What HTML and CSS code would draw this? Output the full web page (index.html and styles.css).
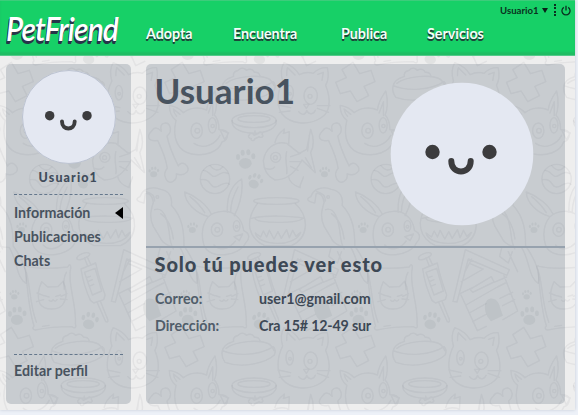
FILE: index.html
```html
<!DOCTYPE html>
<html lang="es">
<head>
<meta charset="utf-8">
<title>PetFriend</title>
<link rel="stylesheet" href="styles.css">
</head>
<body>
<div class="app">
  <svg class="doodles" width="575" height="410" viewBox="0 0 575 410" aria-hidden="true">
    <defs>
      <g id="paw"><ellipse cx="0" cy="7" rx="19" ry="16"/><ellipse cx="-22" cy="-12" rx="6" ry="9"/><ellipse cx="-8" cy="-25" rx="6" ry="9"/><ellipse cx="9" cy="-26" rx="6" ry="9"/><ellipse cx="24" cy="-14" rx="6" ry="9"/></g>
      <g id="tile">
        <g class="ink" transform="translate(140 55) scale(.33333)">
          <path d="M247 92c5-22 25-24 34-28-4-14 8-16 14-18 12-13 22-3 24 0 14-8 22 0 24 6 18-2 17 13 17 13 30 3 37 14 42 27M247 92c-4 16 0 24 8 35 55 20 125 0 148-22 4-10 3-20-3-25-40 26-110 30-153 12zM258 85c28-22 100-28 132-12"/>
          <path d="M428 78c-6-20-5-40 4-55 20 7 38 23 46 36 17-8 30-8 42-4 12-12 24-18 42-17 5 20 2 40-5 53 20 50 10 83-15 98-40 25-92 17-116-12-18-28-14-66 2-99zM440 62c0-12 0-18 3-24l22 22M533 58l17-6-4 24M414 150l38 8M418 172l32-4M532 160l34 12M532 152l38 0M476 170c10 14 22 8 24-4 6 14 20 14 26 0M491 148l16 0-8 12z"/>
          <ellipse cx="512" cy="122" rx="20" ry="26"/><ellipse cx="449" cy="113" rx="11" ry="22"/><circle cx="510" cy="124" r="6"/><circle cx="450" cy="116" r="4"/>
          <path d="M606 44l33-22 20 34 34-10 12 34-33 14 14 28-35 18-20-32-30 8-14-34 32-14z"/>
          <path d="M108 196c-14-10-20-28-20-45 20 3 35 14 42 22 20-16 48-18 70-8 2-25 16-44 25-57 8 30 4 60-2 72 12 12 14 28 14 44 18 0 26 4 26 13 0 16-10 22-17 24-10 30-52 44-91 36-40-8-60-45-47-101zM110 184c-6-6-9-15-10-22l20 16M205 174l13-34 0 42M162 265c30 22 66 0 78-24M240 224l26 10-12 20z"/>
          <ellipse cx="170" cy="227" rx="17" ry="23"/><ellipse cx="217" cy="211" rx="12" ry="23"/><circle cx="172" cy="227" r="7"/><circle cx="218" cy="213" r="5"/>
          <ellipse cx="342" cy="196" rx="66" ry="22"/><ellipse cx="342" cy="192" rx="48" ry="10"/><path d="M276 197c-4 50 138 50 133-1M345 228v8M328 240c5-10 14-2 14 1l14-6c0-8 16-3 10 3 8 6-2 12-8 7l-14 7c-2 9-14 4-10-2-10 0-10-8-6-10z"/>
          <path d="M35 228c-18 18-8 34 18 28 13 27 25 55 29 84-18 20 1 54 20 37 7-5 8-14 7-20 28 8 48-13 26-30-8-5-17-1-20 6-14-28-28-59-34-90 20-17 8-43-10-38-10 3-9 16-7 24-12-14-22-12-29-1z"/>
          <path d="M370 317c6-38 36-60 70-52l38 30 22-12 12-60c13 34 7 57 0 70l14 60-40-38c-18 35-45 60-81 60-22-10-34-32-35-58zM405 262c4-18 12-28 28-40 0 8-3 14-3 14l18-6-2 38M440 290c-7 26 4 52 0 66M452 305l30-10M450 320l34 0M452 334l22 12M446 366c2 16 18 26 34 32 0-14 8-20 10-32M376 340c12 4 22 4 28-4M508 240l-5 48M514 338l-18-30"/><circle cx="407" cy="307" r="15"/><circle cx="406" cy="308" r="6"/>
          <circle cx="225" cy="372" r="44"/><path d="M190 346c20 0 22 26 40 16 16-10 24-12 34-6M184 374c34-4 22 30 50 20 18-10 30-12 34-6M210 332c10 12 24 20 38 4"/>
          <path d="M0 425c8-24 34-32 62-22 26 4 36 24 32 48 34 36 38 78 38 122 30 42 44 80 38 112-30-18-24-66-50-108-32 0-54-12-60-30l-20-33c-14-28-6-52 0-72-2-20-12-28-24-26l-4 28c-22-4-28-12-12-19zM44 464c28-10 38 32 42 58 4 22 2 40 14 60M62 476c24 16 34 46 38 76M60 580l-6 24 26 20 12-34M80 590l28 60M18 410c18 4 26 14 26 28"/><circle cx="52" cy="426" r="4"/>
          <path d="M205 485c-36-10-70-40-71-74 34 12 66 38 80 66M150 425c18 14 32 28 44 48M262 472c-2-44 10-80 43-100 5 40-6 78-22 110M272 470c0-30 10-52 22-74M205 485c22-20 64-22 84-2 20 16 20 34 22 44 20 8 18 26 6 36-18 42-110 52-125 8-10-34-6-62 13-86zM222 570c20 22 50 8 64-12M282 545l26-8-10 20z"/>
          <ellipse cx="231" cy="524" rx="17" ry="20"/><ellipse cx="290" cy="513" rx="10" ry="16"/><circle cx="232" cy="524" r="7"/><circle cx="290" cy="515" r="4"/>
          <path d="M352 446c-40 54-26 104 22 126h80c54-24 54-88 12-126M334 490c40-10 120-8 160 0M346 534c8 40 120 44 136-2l-14 12-10-18-10 22-8-24-16 26-10-20-12 22-14-26-8 20-10-18-8 18zM346 490c-2 16 130 16 142 0"/><ellipse cx="409" cy="438" rx="68" ry="10"/>
          <g class="fill"><use href="#paw" transform="translate(316 318)"/><use href="#paw" transform="translate(343 382) rotate(20) scale(.8)"/><use href="#paw" transform="translate(41 354) scale(.55)"/><use href="#paw" transform="translate(157 521) scale(.55)"/></g>
        </g>
        <g class="ink" transform="translate(360 235) scale(.33333)">
          <path d="M24 94c38 8 88 6 124 2 5-12 10-6 9 3-12 44 18 106 14 168 4 12-3 14-10 8-37 0-77 3-110 10-8 0-10-8-4-12-16-48-20-110-25-168-7-10-3-16 2-11zM24 112c12 44 10 96 30 150M144 112c-12 20-8 36-6 52"/>
          <path d="M64 205c-8-20-4-44 6-65l18 16 30-1 16-16c12 24 12 50 2 65-12 24-60 24-72 1zM78 182l14 4M112 184l14-4M92 196c6 6 10 2 12-2 4 6 8 6 12 0M56 174l20 8M54 200l22-6M126 192l20 2M128 184l18-8M72 274l20-3"/>
          <path d="M176 72c-6-10 30-25 38-16 2 8-32 24-38 16zM198 68l10 26M206 65l12 25M188 102l44-18c6 34 16 62 28 96l-4 14-30 10-10-8c-16-34-24-66-28-94zM198 112l32-12 20 68-28 12zM204 128l12-4M208 140l14-6M212 154l14-6M236 202l26 58c10 4 6-8 4-12l-20-49"/>
          <path d="M316 44l132 60-7 17-116-49-34 129-12-2zM303 180l49 107 27-13M314 112l21-40M432 122l41 106-44 26M300 176l50-24M330 163l64-38 8 16-64 31zM318 210l94-54 24-12M328 234l50-28M338 260l40-22M402 142l38-16M420 190l38-18M428 212l36-18M304 140l66-38M330 86l38 16"/>
          <path class="fill" d="M375 210c4-28 40-26 46 10l8 22-36 17c-16-18-20-34-18-49z"/>
          <g class="fill"><use href="#paw" transform="translate(212 262) rotate(12) scale(.9)"/><use href="#paw" transform="translate(500 182) scale(.5)"/><use href="#paw" transform="translate(508 248) scale(.95)"/></g>
        </g>
      </g>
      <g id="row"><use href="#tile" x="-512.4"/><use href="#tile" x="-341.6"/><use href="#tile" x="-170.8"/><use href="#tile"/><use href="#tile" x="170.8"/><use href="#tile" x="341.6"/></g>
    </defs>
    <use href="#row" y="-265"/><use href="#row"/><use href="#row" y="265"/>
  </svg>

  <header class="header">
    <div class="logo"><span>PetFriend</span></div>
    <nav class="nav">
      <a class="n1"><span>Adopta</span></a><a class="n2"><span>Encuentra</span></a><a class="n3"><span>Publica</span></a><a class="n4"><span>Servicios</span></a>
    </nav>
    <div class="account">
      <span>Usuario1</span><i class="caret"></i><i class="divider"></i>
      <svg width="10" height="11" viewBox="0 0 9 10"><path d="M2.5 2.2A3.7 3.7 0 1 0 6.5 2.2M4.5.7V5" fill="none" stroke="#0a3020" stroke-width="1.2"/></svg>
    </div>
  </header>

  <main class="content">
    <aside class="panel side">
      <svg class="avatar" width="94" height="94" viewBox="-71.8 -71.8 143.6 143.6"><use href="#face"/><circle r="71" fill="none" stroke="#b3bac9" stroke-width="1.2"/></svg>
      <div class="name">Usuario1</div>
      <ul class="menu">
        <li><span>Información</span><i class="pointer"></i></li><li><span>Publicaciones</span></li><li><span>Chats</span></li>
      </ul>
      <div class="edit"><span>Editar perfil</span></div>
    </aside>
    <section class="panel profile">
      <div class="top">
        <h1>Usuario1</h1>
        <svg class="photo" width="144" height="144" viewBox="-72 -72 144 144">
          <g id="face"><circle r="71.3" fill="#e4e8f2"/><g transform="translate(-1 0)"><circle cx="-28.5" cy="-2" r="7.2" fill="#3c3c3e"/><circle cx="28.5" cy="-2" r="7.2" fill="#3c3c3e"/><path d="M-9.7 7C-9.7 21 9.7 21 9.7 7" fill="none" stroke="#3c3c3e" stroke-width="6" stroke-linecap="round"/></g></g>
        </svg>
      </div>
      <div class="details">
        <h2>Solo tú puedes ver esto</h2>
        <dl><dt><span>Correo:</span></dt><dd><span>user1@gmail.com</span></dd><dt><span>Dirección:</span></dt><dd class="addr"><span>Cra 15# 12-49 sur</span></dd></dl>
      </div>
    </section>
  </main>
</div>
</body>
</html>
```
FILE: styles.css
```css
* { box-sizing: border-box; margin: 0; padding: 0; }
body { width: 578px; height: 415px; overflow: hidden; background: #edf1f8; font-family: Lato, "Liberation Sans", sans-serif; color: #48535f; }
.app { position: relative; width: 575px; height: 410px; background: #eee; box-shadow: 0 0 3px #c3cad6; }
.doodles { position: absolute; inset: 0; }
.ink { fill: none; stroke: rgba(70, 76, 84, .065); stroke-width: 4.2; stroke-linejoin: round; stroke-linecap: round; }
.fill { fill: rgba(70, 76, 84, .075); stroke: none; }
.header { position: relative; display: flex; height: 56px; background: #17d067; border-top: 1px solid #3dcc7b; border-bottom: 1px solid #55c98a; box-shadow: inset 0 -3px 2px #1fbd63; }
.logo { width: 146px; padding: 7px 0 0 6px; font: italic 600 33px/40px Lato, sans-serif; letter-spacing: -1px; color: #fff; text-shadow: 0 1px #263449, -1px 2px #263449, -1px 3px #263449; }
.logo span { display: inline-block; transform: scaleX(.91); transform-origin: 0 50%; }
.nav { display: flex; width: 353px; padding-top: 23px; font-weight: 700; font-size: 15.5px; line-height: 18px; color: #f3fff8; text-shadow: 0 1px 1px #173f34, 0 2px #1c4a3b; }
.nav span, .menu span, .edit span, dl span { display: inline-block; transform: scaleX(.92); transform-origin: 0 50%; white-space: nowrap; }
.n1 { width: 86.5px; } .n2 { width: 108px; } .n3 { width: 86px; }
.account { display: flex; align-items: center; height: 18px; padding-left: 1px; font-size: 9.6px; font-weight: 700; color: #0a3020; white-space: nowrap; }
.caret { margin-left: 3px; border: solid transparent; border-width: 5px 3.5px 0; border-top-color: #0a2018; }
.divider { height: 12px; margin: 0 5px 0 6px; border-left: 2px dotted #0a3020; }
.content { position: relative; display: flex; gap: 15px; padding: 8px 10px 6px 6px; height: 354px; }
.panel { background: rgba(86, 102, 118, .25); border-radius: 5px; height: 340px; }
.side { width: 124.5px; padding: 6px 8px 0; }
.avatar { display: block; margin: 0 auto; position: relative; left: .5px; }
.name { margin-top: 5px; height: 26px; font-size: 12.5px; line-height: 17px; font-weight: 900; letter-spacing: 1.1px; text-align: center; border-bottom: 1px dashed #64778c; color: #414c5b; }
.menu { list-style: none; padding-top: 5px; height: 160px; font-size: 15.5px; line-height: 24px; font-weight: 700; border-bottom: 1px dashed #64778c; }
.menu li { display: flex; justify-content: space-between; align-items: center; }
.pointer { border: solid transparent; border-width: 6.5px 8px 6.5px 0; border-right-color: #000; position: relative; top: 1px; }
.edit { padding-top: 3px; font-size: 15.5px; line-height: 24px; font-weight: 700; }
.profile { width: 419.5px; }
.top { display: flex; justify-content: space-between; height: 183.5px; padding: 0 31px 0 9px; border-bottom: 2px solid #97a2ae; }
h1 { padding-top: 4px; font-size: 35px; line-height: 44px; }
.photo { margin-top: 18px; }
.details { padding: 3px 9px; color: #3d4855; }
h2 { font-size: 20px; line-height: 26px; font-weight: 900; letter-spacing: .9px; white-space: nowrap; }
dl { display: grid; grid-template-columns: 104.5px 1fr; margin-top: 8px; font-size: 15.5px; line-height: 27px; font-weight: 700; }
dt { color: #505d6a; }
.addr { letter-spacing: -.2px; }
```
